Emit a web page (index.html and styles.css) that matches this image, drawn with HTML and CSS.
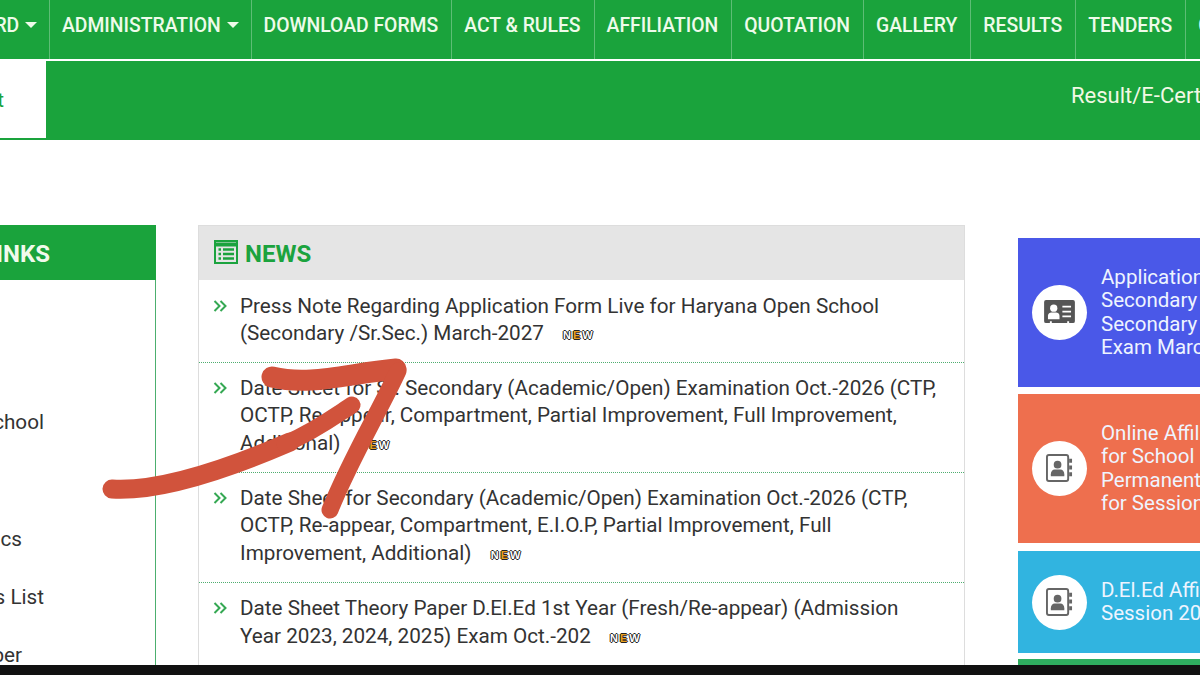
FILE: index.html
```html
<!DOCTYPE html>
<html>

<head>
	<title>News</title>
	<link rel="stylesheet" href="styles.css">
</head>

<body>

<div class="page">

	<!-- main menu, first item runs off the left edge -->
	<ul class="mainMenu">
		<li class="menuItem firstItem">BOARD <span class="caret"></span></li>
		<li class="menuItem">ADMINISTRATION <span class="caret"></span></li>
		<li class="menuItem">DOWNLOAD FORMS</li>
		<li class="menuItem">ACT &amp; RULES</li>
		<li class="menuItem">AFFILIATION</li>
		<li class="menuItem">QUOTATION</li>
		<li class="menuItem">GALLERY</li>
		<li class="menuItem">RESULTS</li>
		<li class="menuItem">TENDERS</li>
		<li class="menuItem">CONTACT</li>
	</ul>

	<div class="ticker">
		<div class="tickerLabel"><span>Alert</span></div>
		<div class="tickerText">Result/E-Certificate</div>
	</div>

	<div class="columns">

		<!-- left column -->
		<div class="sideLinks">
			<h2 class="sideTitle"><span>LINKS</span></h2>
			<ul class="sideList">
				<li></li>
				<li></li>
				<li><span>School</span></li>
				<li></li>
				<li class="shortLink"><span>Topics</span></li>
				<li><span>Schools List</span></li>
				<li class="shortLink"><span>Number</span></li>
			</ul>
		</div>

		<!-- news -->
		<div class="newsPanel">
			<h2 class="newsTitle">
				<svg class="newsIcon" viewBox="0 0 24 24" width="24" height="24">
					<rect x="1" y="1" width="22" height="22" fill="none" stroke="#1ba33e" stroke-width="2"/>
					<path d="M1 4.500h22" stroke="#1ba33e" stroke-width="4"/>
					<path d="M4.500 9.500h2.500M4.500 14h2.500M4.500 18.500h2.500M9 9.500h11M9 14h11M9 18.500h11" stroke="#1ba33e" stroke-width="2.600"/>
				</svg>
				NEWS
			</h2>
			<ul class="newsList">
				<li class="newsRow">
					<svg class="chevrons" viewBox="0 0 14 14" width="14" height="14"><path d="M1.500 2l5 5-5 5M7.500 2l5 5-5 5" fill="none" stroke="#35a853" stroke-width="2"/></svg>
					<p>Press Note Regarding Application Form Live for Haryana Open School (Secondary /Sr.Sec.) March-2027 <span class="newBadge">N<b>E</b>W</span></p>
				</li>
				<li class="newsRow">
					<svg class="chevrons" viewBox="0 0 14 14" width="14" height="14"><path d="M1.500 2l5 5-5 5M7.500 2l5 5-5 5" fill="none" stroke="#35a853" stroke-width="2"/></svg>
					<p>Date Sheet for Sr. Secondary (Academic/Open) Examination Oct.-2026 (CTP, OCTP, Re-appear, Compartment, Partial Improvement, Full Improvement, Additional) <span class="newBadge">N<b>E</b>W</span></p>
				</li>
				<li class="newsRow">
					<svg class="chevrons" viewBox="0 0 14 14" width="14" height="14"><path d="M1.500 2l5 5-5 5M7.500 2l5 5-5 5" fill="none" stroke="#35a853" stroke-width="2"/></svg>
					<p>Date Sheet for Secondary (Academic/Open) Examination Oct.-2026 (CTP, OCTP, Re-appear, Compartment, E.I.O.P, Partial Improvement, Full Improvement, Additional) <span class="newBadge">N<b>E</b>W</span></p>
				</li>
				<li class="newsRow">
					<svg class="chevrons" viewBox="0 0 14 14" width="14" height="14"><path d="M1.500 2l5 5-5 5M7.500 2l5 5-5 5" fill="none" stroke="#35a853" stroke-width="2"/></svg>
					<p>Date Sheet Theory Paper D.El.Ed 1st Year (Fresh/Re-appear) (Admission Year 2023, 2024, 2025) Exam Oct.-202 <span class="newBadge">N<b>E</b>W</span></p>
				</li>
			</ul>
		</div>

		<!-- coloured cards, right edge is cut off -->
		<div class="cards">
			<div class="card blueCard">
				<div class="cardIcon">
					<svg viewBox="0 0 32 26" width="31" height="25">
						<path d="M2 0h28a2 2 0 0 1 2 2v20a2 2 0 0 1-2 2h-4v-2h-2v2H8v-2H6v2H2a2 2 0 0 1-2-2V2a2 2 0 0 1 2-2z" fill="#555"/>
						<circle cx="10" cy="8.500" r="3.800" fill="#fff"/>
						<path d="M4 20v-3.500c0-2.500 2-3.500 3.500-3.500h5c1.500 0 3.500 1 3.500 3.500V20z" fill="#fff"/>
						<path d="M19 7h9M19 12h9M19 17h9" stroke="#fff" stroke-width="1.800"/>
					</svg>
				</div>
				<div class="cardText">Application Form for<br>Secondary and Senior<br>Secondary Public<br>Exam March-2027</div>
			</div>
			<div class="card orangeCard">
				<div class="cardIcon">
					<svg viewBox="0 0 28 30" width="27" height="29">
						<rect x="1" y="1" width="22" height="27" rx="2" fill="none" stroke="#666" stroke-width="2"/>
						<path d="M24 5h3v4h-3M24 12h3v4h-3M24 19h3v4h-3" fill="#666"/>
						<circle cx="12" cy="11" r="4" fill="#666"/>
						<path d="M5 23v-2c0-3 2-5 4-5h6c2 0 4 2 4 5v2z" fill="#666"/>
					</svg>
				</div>
				<div class="cardText">Online Affiliation<br>for School<br>Permanent<br>for Session</div>
			</div>
			<div class="card skyCard">
				<div class="cardIcon">
					<svg viewBox="0 0 28 30" width="27" height="29">
						<rect x="1" y="1" width="22" height="27" rx="2" fill="none" stroke="#666" stroke-width="2"/>
						<path d="M24 5h3v4h-3M24 12h3v4h-3M24 19h3v4h-3" fill="#666"/>
						<circle cx="12" cy="11" r="4" fill="#666"/>
						<path d="M5 23v-2c0-3 2-5 4-5h6c2 0 4 2 4 5v2z" fill="#666"/>
					</svg>
				</div>
				<div class="cardText">D.El.Ed Affiliation<br>Session 2026</div>
			</div>
			<div class="card greenCard"></div>
		</div>

	</div>

	<!-- hand drawn arrow on top of the page -->
	<svg class="arrow" viewBox="0 0 1200 675" width="1200" height="675">
		<g fill="none" stroke="#d1533c" stroke-linecap="round" stroke-linejoin="round">
			<path d="M112 489C160 492 225 470 290 442" stroke-width="19"/>
			<path d="M285 444C315 431 335 416 352 405" stroke-width="17"/>
			<path d="M272 377C310 386 345 374 396 369" stroke-width="21"/>
			<path d="M398 371C380 410 350 460 330 510" stroke-width="17"/>
		</g>
	</svg>

	<div class="bottomBar"></div>

</div>

</body>
</html>
```
FILE: styles.css
```css
*
{
	box-sizing: border-box;
}

html, body
{
	margin: 0;
	padding: 0;
	background: #fff;
}

ul
{
	list-style: none;
	margin: 0;
	padding: 0;
}

.page
{
	position: relative;
	width: 1200px;
	height: 675px;
	overflow: hidden;
	font-family: Roboto, "Liberation Sans", sans-serif;
	color: #333;
}

/* main menu */

.mainMenu
{
	display: flex;
	height: 59px;
	margin-left: -70px;
	width: 1400px;
	background: #1aa33c;
}

.menuItem
{
	display: flex;
	align-items: center;
	flex: none;
	gap: 1px;
	height: 59px;
	padding: 0 13px 9px 12px;
	border-right: 1px solid #5dbd75;
	color: #eefbea;
	font-size: 19.350px;
	font-weight: 500;
	white-space: pre;
}

.firstItem
{
	width: 120px;
	justify-content: flex-end;
	padding-right: 13px;
}

.caret
{
	width: 0;
	height: 0;
	margin-right: -1px;
	border-left: 6px solid transparent;
	border-right: 6px solid transparent;
	border-top: 6px solid #eefbea;
}

/* ticker */

.ticker
{
	display: flex;
	height: 79px;
	margin-top: 2px;
	background: #1aa33c;
	overflow: hidden;
}

.tickerLabel
{
	display: flex;
	justify-content: flex-end;
	align-items: center;
	flex: none;
	width: 46px;
	height: 77px;
	background: #fff;
	color: #1aa33c;
	font-size: 20.700px;
}

.tickerLabel span
{
	margin-right: 42px;
}

.tickerText
{
	margin-left: 1025px;
	padding-top: 22px;
	color: #f2f8e4;
	font-size: 22px;
	white-space: nowrap;
}

/* columns */

.columns
{
	display: flex;
	align-items: flex-start;
	margin-top: 85px;
}

.sideLinks
{
	flex: none;
	width: 156px;
	height: 450px;
	border-right: 1px solid #4caf6e;
}

.sideTitle
{
	display: flex;
	justify-content: flex-end;
	align-items: center;
	width: 156px;
	height: 55px;
	margin: 0;
	padding: 3px 106px 0 0;
	background: #1aa33c;
	color: #f1faec;
	font-size: 24px;
	font-weight: 700;
}

.sideList
{
	margin-top: -3.500px;
}

.sideList li
{
	display: flex;
	justify-content: flex-end;
	align-items: center;
	width: 44px;
	height: 58.300px;
	font-size: 20.700px;
	white-space: nowrap;
}

.sideList .shortLink
{
	width: 22px;
}

.newsPanel
{
	flex: none;
	width: 767px;
	margin-left: 42px;
	border-left: 1px solid #ddd;
	border-right: 1px solid #ddd;
}

.newsTitle
{
	display: flex;
	align-items: center;
	gap: 7px;
	height: 55px;
	margin: 0;
	padding: 2px 0 0 15px;
	background: #e5e5e5;
	border-top: 1px solid #ddd;
	color: #1ba33e;
	font-size: 24px;
	font-weight: 700;
}

.newsIcon
{
	margin-top: -5px;
}

.newsRow
{
	display: flex;
	gap: 13px;
	padding: 13px 24px 14px 14px;
	border-bottom: 1px dotted #4fae70;
}

.newsRow + .newsRow
{
	padding-top: 12px;
	padding-bottom: 15px;
}

.chevrons
{
	flex: none;
	margin-top: 6px;
}

.newsRow p
{
	margin: 0;
	font-size: 20.700px;
	line-height: 27.400px;
}

.newBadge
{
	display: inline-block;
	margin-left: 14px;
	color: #fff;
	font-family: "Liberation Sans", sans-serif;
	font-size: 11px;
	font-weight: 700;
	line-height: 12px;
	letter-spacing: 2px;
	vertical-align: 1px;
	text-shadow: 1px 0 #222, -1px 0 #222, 0 1px #222, 0 -1px #222;
}

.newBadge b
{
	color: #e8a020;
}

/* cards */

.cards
{
	flex: none;
	display: flex;
	flex-direction: column;
	gap: 7px;
	width: 300px;
	margin-left: 53px;
	margin-top: 13px;
}

.card
{
	display: flex;
	align-items: center;
	gap: 14px;
	height: 149px;
	padding-left: 14px;
	color: #eef4ff;
	font-size: 20.500px;
	line-height: 23.500px;
}

.blueCard
{
	background: #4a58e8;
}

.orangeCard
{
	background: #ee6f4e;
}

.skyCard
{
	height: 102px;
	margin-top: 1px;
	background: #31b4e0;
}

.greenCard
{
	height: 60px;
	margin-top: -1px;
	background: #2fae60;
}

.cardIcon
{
	display: flex;
	justify-content: center;
	align-items: center;
	flex: none;
	width: 55px;
	height: 55px;
	border-radius: 50%;
	background: #fff;
}

.cardText
{
	white-space: nowrap;
}

/* overlays */

.arrow
{
	position: absolute;
	top: 0;
	left: 0;
	filter: blur(0.600px);
}

.bottomBar
{
	position: absolute;
	left: 0;
	bottom: 0;
	width: 1200px;
	height: 10px;
	background: #111;
}
```
